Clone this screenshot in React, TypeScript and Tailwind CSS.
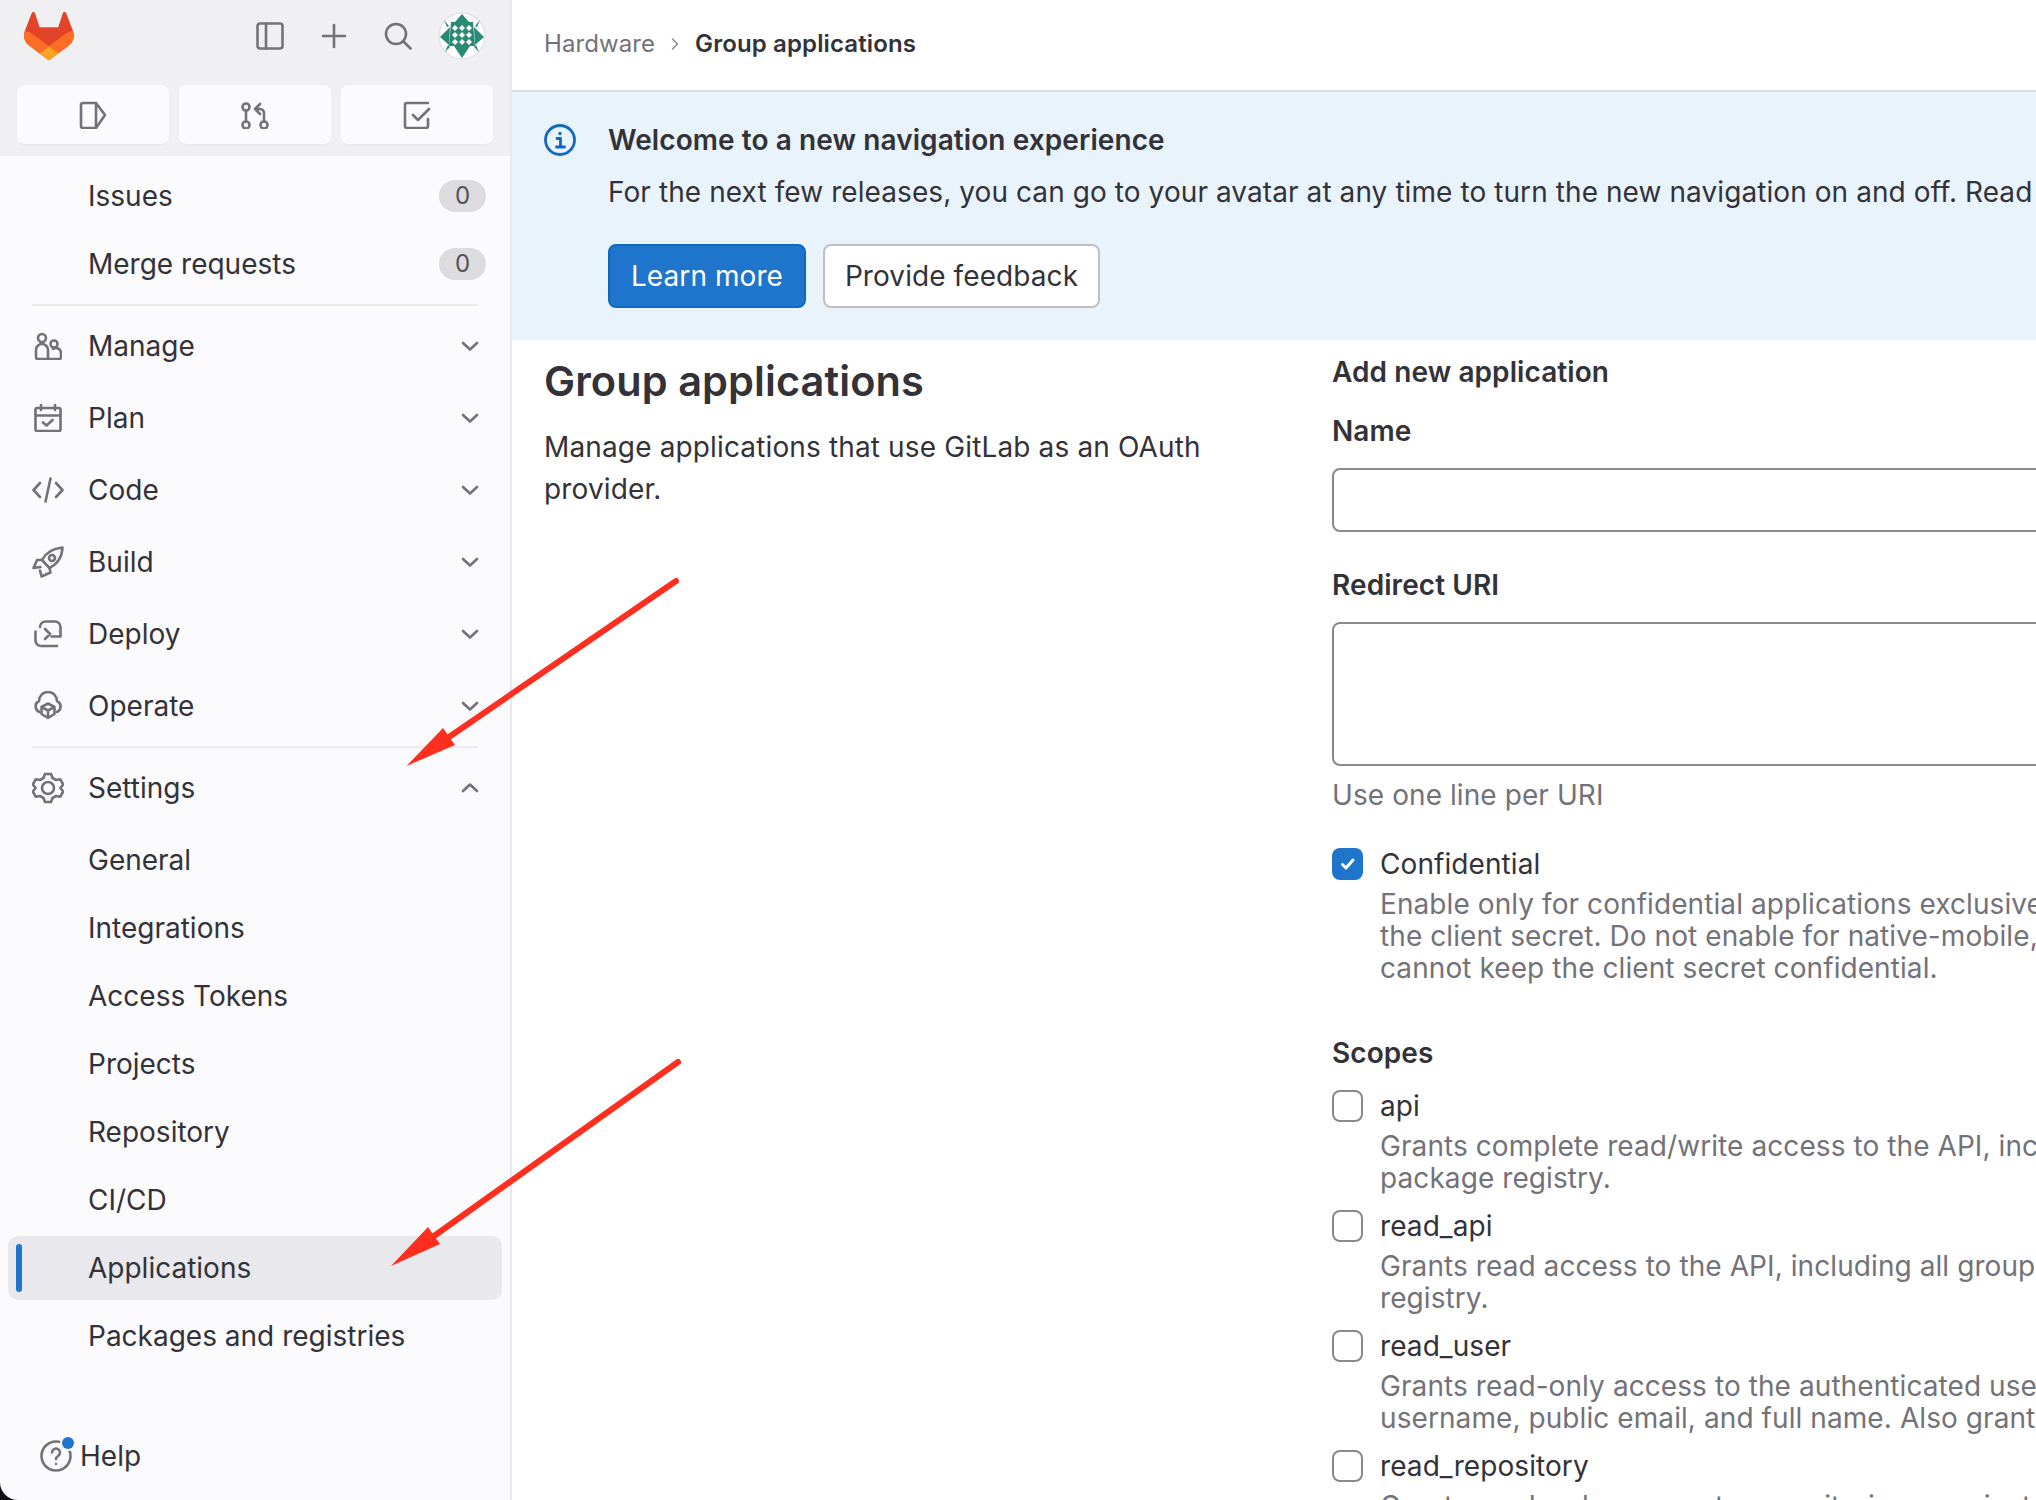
import React from 'react';

const Icon: React.FC<{ w?: number; h?: number; children: React.ReactNode; className?: string }> = ({ w = 28, h = 28, children, className }) => (
  <svg
    width={w}
    height={h}
    viewBox={`0 0 ${w} ${h}`}
    fill="none"
    stroke="#737278"
    strokeWidth={2.6}
    strokeLinecap="round"
    strokeLinejoin="round"
    className={className}
  >
    {children}
  </svg>
);

const Tanuki = () => (
  <svg width="50" height="48" viewBox="0 0 25 24">
    <path fill="#E24329" d="m24.507 9.5-.034-.09L21.082.562a.896.896 0 0 0-1.694.091l-2.29 7.01H7.825L5.535.653a.898.898 0 0 0-1.694-.09L.451 9.411.416 9.5a6.297 6.297 0 0 0 2.09 7.278l.012.01.03.022 5.16 3.867 2.56 1.935 1.554 1.176a1.051 1.051 0 0 0 1.268 0l1.555-1.176 2.56-1.935 5.197-3.89.014-.01A6.297 6.297 0 0 0 24.507 9.5Z" />
    <path fill="#FC6D26" d="m24.507 9.5-.034-.09a11.44 11.44 0 0 0-4.56 2.051l-7.447 5.632 4.742 3.584 5.197-3.89.014-.01A6.297 6.297 0 0 0 24.507 9.5Z" />
    <path fill="#FCA326" d="m7.707 20.677 2.56 1.935 1.555 1.176a1.051 1.051 0 0 0 1.268 0l1.555-1.176 2.56-1.935-4.743-3.584-4.755 3.584Z" />
    <path fill="#FC6D26" d="M5.01 11.461a11.43 11.43 0 0 0-4.56-2.05L.416 9.5a6.297 6.297 0 0 0 2.09 7.278l.012.01.03.022 5.16 3.867 4.745-3.584-7.444-5.632Z" />
  </svg>
);

const Avatar = () => (
  <svg width="48" height="48" viewBox="0 0 48 48">
    <circle cx="24" cy="24" r="23" fill="#ffffff" stroke="#e4e4e7" strokeWidth="1.5" />
    <g fill="#2b8a76">
      <polygon points="24,2 31,10 17,10" />
      <polygon points="24,46 16,34 32,34" />
      <polygon points="13,10 35,10 37,34 11,34" />
      <polygon points="12,15 2,25 11,33" />
      <polygon points="36,15 46,25 37,33" />
      <polygon points="6,8 11,14 9,15" />
      <polygon points="42,8 37,14 39,15" />
      <polygon points="7,40 12,35 10,33" />
      <polygon points="41,40 36,35 38,33" />
    </g>
    <g fill="#ffffff">
      {[17, 24, 31].map((x) =>
        [16, 23, 30].map((y) => <polygon key={`${x}-${y}`} points={`${x},${y - 3} ${x + 3},${y} ${x},${y + 3} ${x - 3},${y}`} />)
      )}
    </g>
  </svg>
);

const Chevron: React.FC<{ up?: boolean }> = ({ up }) => (
  <svg width="18" height="12" viewBox="0 0 18 12" fill="none" stroke="#737278" strokeWidth="2.6" strokeLinecap="round" strokeLinejoin="round">
    {up ? <path d="M2 9l7-6.5L16 9" /> : <path d="M2 3l7 6.5L16 3" />}
  </svg>
);

const navIcons: Record<string, React.ReactNode> = {
  Manage: (
    <Icon>
      <circle cx="8" cy="6" r="4" />
      <path d="M2 25v-7a6 6 0 0 1 12 0v9H4a2 2 0 0 1-2-2z" />
      <circle cx="20" cy="12" r="3.5" />
      <path d="M14 27h11a2 2 0 0 0 2-2v-4a5 5 0 0 0-8-4" />
    </Icon>
  ),
  Plan: (
    <Icon>
      <rect x="1.5" y="4" width="25" height="23" rx="1.5" />
      <path d="M7 1v5M21 1v5M1.5 11.5h25M9 18.5l3.5 3 6-5.5" />
    </Icon>
  ),
  Code: (
    <Icon w={32}>
      <path d="M8 7l-6.5 7L8 21M24 7l6.5 7L24 21M18.5 2.5l-5 23" />
    </Icon>
  ),
  Build: (
    <Icon w={32} h={32}>
      <path d="M30.5 1.5C21 2.500 13.500 7 10 14l7.500 8C25.500 18 30 12 30.500 1.500z" />
      <circle cx="20" cy="12" r="3" />
      <path d="M10 14H5L1.500 22l7-1M17.500 22l1 4.500-9 4-1.500-6" />
    </Icon>
  ),
  Deploy: (
    <Icon>
      <path d="M6 7a5.500 5.500 0 0 1 5.500-5.500h9.500a5.500 5.500 0 0 1 5.500 5.500v9.500h-9M1.500 11.500v9a5.500 5.500 0 0 0 5.500 5.500h16M11 9l5 5-5 5" />
    </Icon>
  ),
  Operate: (
    <Icon w={32} h={30}>
      <path d="M7.500 21A6 6 0 0 1 7 10a9 9 0 0 1 18 0 6 6 0 0 1 0 11" />
      <path d="M16 12.500l6.500 3.500v7L16 27l-6.500-4v-7zM9.500 16l6.500 3.500 6.500-3.500M16 19.500V27" />
    </Icon>
  ),
  Settings: (
    <Icon w={32} h={32}>
      <path d="M13 2h6l1.500 4 3.500 2 4.200-.8 3 5.300-2.800 3.500 2.800 3.500-3 5.300-4.200-.8-3.500 2L19 30h-6l-1.500-4-3.500-2-4.200.8-3-5.300L3.600 16 .8 12.500l3-5.300L8 8l3.500-2z" />
      <circle cx="16" cy="16" r="6" />
    </Icon>
  ),
};

const NavRow: React.FC<{ label: string; up?: boolean }> = ({ label, up }) => (
  <div className="flex items-center h-[72px] pl-[32px] pr-[31px]">
    <span className="w-[32px] flex justify-center">{navIcons[label]}</span>
    <span className="ml-[24px] flex-1">{label}</span>
    <Chevron up={up} />
  </div>
);

const SubRow: React.FC<{ label: string; active?: boolean }> = ({ label, active }) => (
  <div className={`relative flex items-center h-[64px] mb-[4px] mx-[8px] pl-[80px] rounded-[10px] ${active ? 'bg-[#e9e8ec]' : ''}`}>
    {active && <span className="absolute left-[8px] top-[8px] bottom-[8px] w-[6px] rounded-[3px] bg-[#1f75cb]" />}
    {label}
  </div>
);

const CountRow: React.FC<{ label: string }> = ({ label }) => (
  <div className="flex items-center h-[68px] pl-[88px] pr-[24px]">
    <span className="flex-1">{label}</span>
    <span className="w-[47px] h-[32px] rounded-full bg-[#dcdcde] text-[#535158] text-[24px] flex items-center justify-center">0</span>
  </div>
);

const Divider = () => <div className="h-[2px] mx-[32px] bg-[#ececef]" />;

const Sidebar = () => (
  <aside className="w-[512px] shrink-0 h-full flex flex-col bg-[#fbfafd] border-r-2 border-[#e9e8ec] rounded-bl-[18px] overflow-hidden text-[28px] text-[#333238]">
    <div className="h-[156px] bg-[#f0f0f2] shrink-0">
      <div className="h-[72px] flex items-center pl-[24px] pr-[24px]">
        <Tanuki />
        <div className="ml-auto flex items-center">
          <Icon>
            <rect x="1.500" y="1.500" width="25" height="25" rx="2.500" />
            <path d="M10 1.500v25" />
          </Icon>
          <span className="ml-[37px]">
            <Icon w={26} h={26}>
              <path d="M13 2v22M2 13h22" />
            </Icon>
          </span>
          <span className="ml-[37px]">
            <Icon>
              <circle cx="12" cy="12" r="10" />
              <path d="M19.500 19.500l7 7" />
            </Icon>
          </span>
          <span className="ml-[26px]">
            <Avatar />
          </span>
        </div>
      </div>
      <div className="mt-[13px] flex gap-[10px] px-[17px]">
        <div className="flex-1 h-[61px] rounded-[8px] bg-[#fbfafd] border-b-2 border-[#e9e8ec] flex items-center justify-center">
          <Icon>
            <path d="M17 2H4a2 2 0 0 0-2 2v21a2 2 0 0 0 2 2h13M17 2v25M17 2l9 12-9 13" />
          </Icon>
        </div>
        <div className="flex-1 h-[61px] rounded-[8px] bg-[#fbfafd] border-b-2 border-[#e9e8ec] flex items-center justify-center">
          <Icon>
            <circle cx="5" cy="6" r="3.500" />
            <circle cx="5" cy="24" r="3.500" />
            <circle cx="23" cy="24" r="3.500" />
            <path d="M5 10v10M23 20v-8a4 4 0 0 0-4-4h-4M19 3l-5 5 5 5" />
          </Icon>
        </div>
        <div className="flex-1 h-[61px] rounded-[8px] bg-[#fbfafd] border-b-2 border-[#e9e8ec] flex items-center justify-center">
          <Icon>
            <path d="M25 2H4a2 2 0 0 0-2 2v21a2 2 0 0 0 2 2h19a2 2 0 0 0 2-2v-7M10 14l5 5L26 8" />
          </Icon>
        </div>
      </div>
    </div>
    <div className="pt-[6px]">
      <CountRow label="Issues" />
      <CountRow label="Merge requests" />
    </div>
    <div className="mt-[6px]">
      <Divider />
    </div>
    <div className="mt-[4px]">
      {['Manage', 'Plan', 'Code', 'Build', 'Deploy', 'Operate'].map((n) => (
        <NavRow key={n} label={n} />
      ))}
    </div>
    <div className="mt-[4px]">
      <Divider />
    </div>
    <div className="mt-[4px]">
      <NavRow label="Settings" up />
    </div>
    <div className="mt-[4px]">
      {['General', 'Integrations', 'Access Tokens', 'Projects', 'Repository', 'CI/CD'].map((n) => (
        <SubRow key={n} label={n} />
      ))}
      <SubRow label="Applications" active />
      <SubRow label="Packages and registries" />
    </div>
    <div className="mt-auto pb-[23px] pl-[40px] flex items-center">
      <span className="relative flex">
        <Icon w={32} h={32}>
          <circle cx="16" cy="16" r="14.500" />
          <path d="M12 12.500a4 4 0 1 1 6 3.500c-1.300.8-2 1.500-2 3" />
          <path d="M16 24h.01" />
        </Icon>
        <span className="absolute right-[-2px] top-[-3px] w-[12px] h-[12px] rounded-full bg-[#1f75cb] ring-2 ring-[#fbfafd]" />
      </span>
      <span className="ml-[8px]">Help</span>
    </div>
  </aside>
);

const Scope: React.FC<{ name: string; lines: string[] }> = ({ name, lines }) => (
  <div className="flex gap-[17px] mb-[16px]">
    <span className="w-[31px] h-[32px] shrink-0 rounded-[8px] border-2 border-[#89888d] bg-white" />
    <div>
      <div className="h-[32px] leading-[32px] text-[#333238]">{name}</div>
      <div className="mt-[8px] text-[#737278] leading-[32px]">
        {lines.map((l) => (
          <div key={l}>{l}</div>
        ))}
      </div>
    </div>
  </div>
);

const App: React.FC = () => {
  return (
    <div className="relative w-[2036px] h-[1500px] overflow-hidden flex bg-[#111111] whitespace-nowrap font-['Inter',sans-serif]">
      <Sidebar />

      <main className="flex-1 min-w-0 h-full bg-white overflow-hidden text-[28px] tracking-[0.08px] text-[#333238]">
        <div className="h-[92px] border-b-2 border-[#dcdcde] flex items-center pl-[32px] pb-[2px] text-[24px]">
          <span className="text-[#737278]">Hardware</span>
          <svg className="mx-[14px]" width="12" height="14" viewBox="0 0 12 14" fill="none" stroke="#8a898e" strokeWidth="1.500" strokeLinecap="round" strokeLinejoin="round">
            <path d="M3.500 2l5 5-5 5" />
          </svg>
          <span className="font-semibold tracking-[0.12px]">Group applications</span>
        </div>

        <section className="h-[248px] bg-[#e9f3fc] pl-[32px] pt-[32px] flex">
          <svg className="shrink-0" width="32" height="32" viewBox="0 0 32 32" fill="none" stroke="#1068bf" strokeWidth="2.800">
            <circle cx="16" cy="16" r="14.500" />
            <path d="M13 14.500h3.500v8M12.500 23h8" strokeLinecap="round" strokeLinejoin="round" />
            <circle cx="16" cy="9.500" r="1" fill="#1068bf" strokeWidth="1.500" />
          </svg>
          <div className="ml-[32px]">
            <div className="h-[32px] leading-[32px] font-semibold">Welcome to a new navigation experience</div>
            <div className="mt-[20px] h-[32px] leading-[32px]">
              For the next few releases, you can go to your avatar at any time to turn the new navigation on and off. Read more about it
            </div>
            <div className="mt-[36px] flex gap-[17px]">
              <button className="h-[64px] w-[198px] rounded-[8px] bg-[#1f75cb] border-2 border-[#1068bf] text-white">Learn more</button>
              <button className="h-[64px] w-[277px] rounded-[8px] bg-white border-2 border-[#bfbfc3]">Provide feedback</button>
            </div>
          </div>
        </section>

        <div className="flex">
          <div className="w-[820px] shrink-0 pl-[32px]">
            <h1 className="mt-[16px] h-[50px] leading-[50px] text-[41.5px] font-semibold">Group applications</h1>
            <p className="mt-[20px] leading-[42px] tracking-[0.14px]">
              Manage applications that use GitLab as an OAuth
              <br />
              provider.
            </p>
          </div>
          <form className="flex-1 min-w-0">
            <div className="mt-[16px] h-[32px] leading-[32px] font-semibold">Add new application</div>
            <div className="mt-[27px] h-[32px] leading-[32px] font-semibold">Name</div>
            <input className="block mt-[21px] w-[900px] h-[64px] rounded-[8px] border-2 border-[#89888d] bg-white" />
            <div className="mt-[37px] h-[32px] leading-[32px] font-semibold">Redirect URI</div>
            <textarea className="block mt-[21px] w-[900px] h-[144px] rounded-[8px] border-2 border-[#89888d] bg-white resize-none" />
            <div className="mt-[13px] h-[32px] leading-[32px] text-[#737278]">Use one line per URI</div>

            <div className="mt-[37px] flex gap-[17px]">
              <span className="w-[31px] h-[32px] shrink-0 rounded-[8px] bg-[#1f75cb] flex items-center justify-center">
                <svg width="16" height="14" viewBox="0 0 16 14" fill="none" stroke="#ffffff" strokeWidth="3" strokeLinecap="round" strokeLinejoin="round">
                  <path d="M2.500 7.500l3.500 3.500 7-8" />
                </svg>
              </span>
              <div>
                <div className="h-[32px] leading-[32px]">Confidential</div>
                <div className="mt-[8px] text-[#737278] leading-[32px]">
                  <div>Enable only for confidential applications exclusively used by a trusted backend server</div>
                  <div>the client secret. Do not enable for native-mobile, single-page, or other JavaScript</div>
                  <div>cannot keep the client secret confidential.</div>
                </div>
              </div>
            </div>

            <div className="mt-[53px] h-[32px] leading-[32px] font-semibold">Scopes</div>
            <div className="mt-[21px]">
              <Scope name="api" lines={['Grants complete read/write access to the API, including all groups and projects', 'package registry.']} />
              <Scope name="read_api" lines={['Grants read access to the API, including all groups and projects, the container', 'registry.']} />
              <Scope name="read_user" lines={['Grants read-only access to the authenticated user\u2019s profile through the /user', 'username, public email, and full name. Also grants access to read-only API']} />
              <Scope name="read_repository" lines={['Grants read-only access to repositories on private projects using Git-over-HTTP']} />
            </div>
          </form>
        </div>
      </main>

      {/* red annotation arrows drawn over the screenshot */}
      <svg className="absolute inset-0 pointer-events-none" width="2036" height="1500" viewBox="0 0 2036 1500">
        <path d="M676 581L449 737" stroke="#ff2f1f" strokeWidth="6" strokeLinecap="round" />
        <polygon points="406.500,766 443,728 455,745" fill="#ff2f1f" />
        <path d="M678 1062L434 1236" stroke="#ff2f1f" strokeWidth="6" strokeLinecap="round" />
        <polygon points="391,1266 428,1227 440,1244" fill="#ff2f1f" />
      </svg>
    </div>
  );
};

export default App;
